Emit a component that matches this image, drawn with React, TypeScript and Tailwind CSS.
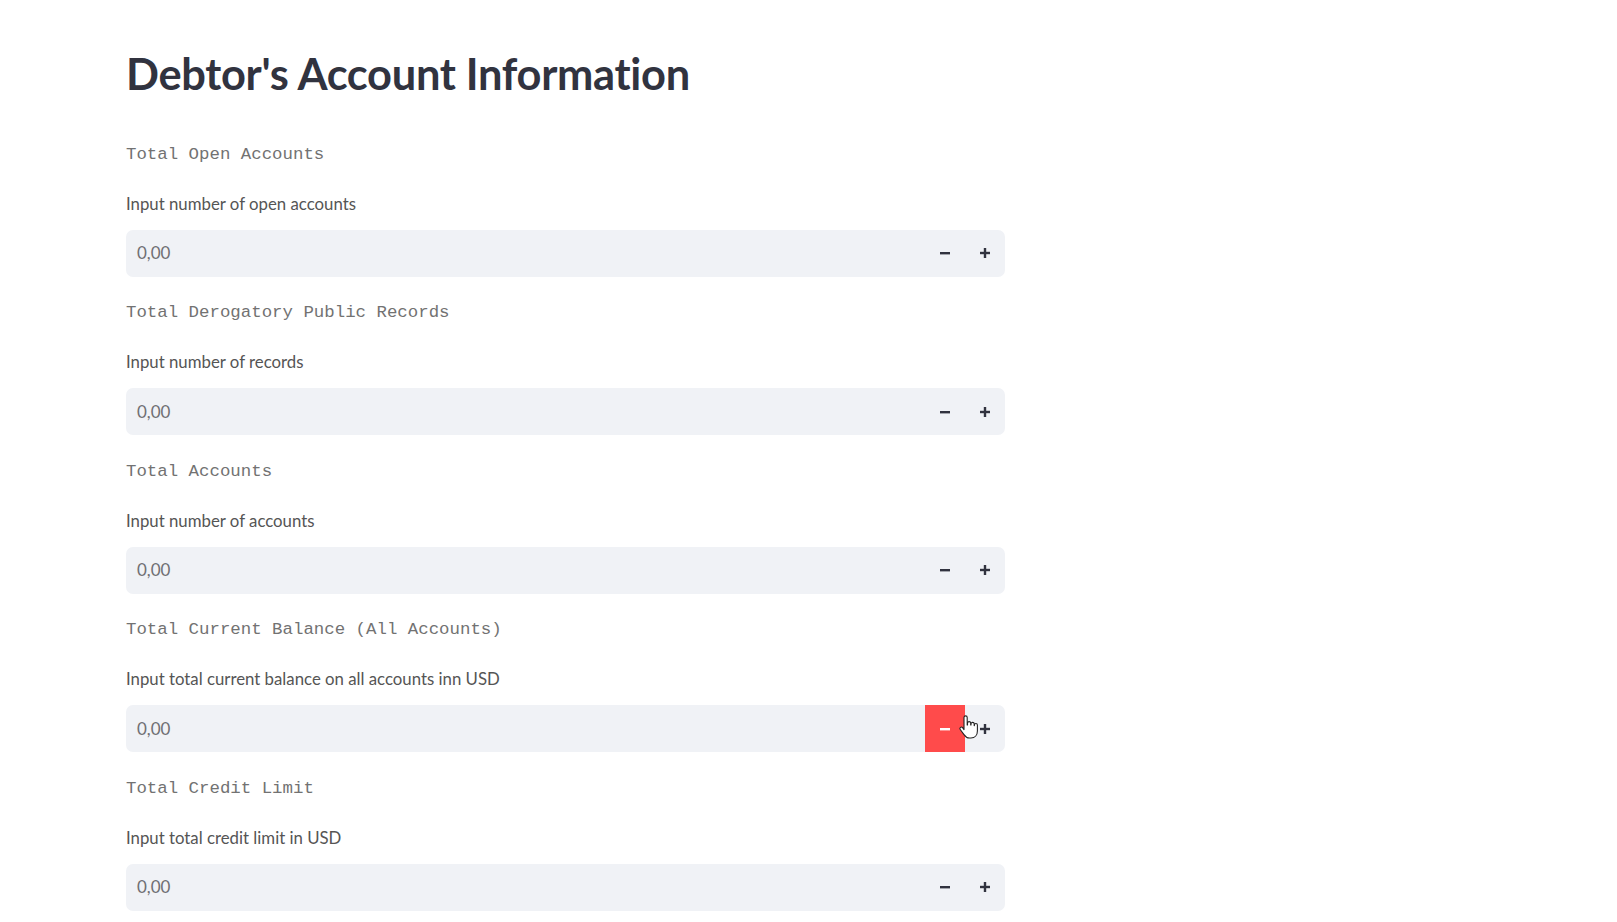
import React from 'react';

const fields = [
  { label: 'Total Open Accounts', help: 'Input number of open accounts' },
  { label: 'Total Derogatory Public Records', help: 'Input number of records' },
  { label: 'Total Accounts', help: 'Input number of accounts' },
  { label: 'Total Current Balance (All Accounts)', help: 'Input total current balance on all accounts inn USD', hover: true },
  { label: 'Total Credit Limit', help: 'Input total credit limit in USD' },
];

const Minus = () => (
  <svg width="12" height="12" viewBox="0 0 12 12">
    <rect x="1" y="5" width="10" height="2.4" fill="currentColor" />
  </svg>
);

const Plus = () => (
  <svg width="12" height="12" viewBox="0 0 12 12">
    <rect x="1" y="4.8" width="10" height="2.4" fill="currentColor" />
    <rect x="4.8" y="1" width="2.4" height="10" fill="currentColor" />
  </svg>
);

const HandCursor = () => (
  <svg width="22" height="26" viewBox="0 0 22 26">
    <path
      d="M6 13V3.5a1.6 1.6 0 0 1 3.2 0V11h.3V9.2a1.6 1.6 0 0 1 3.2 0V11h.3V10a1.6 1.6 0 0 1 3.2 0v1.6h.2v-.6a1.5 1.5 0 0 1 3 0v6c0 4-2.4 7-6.5 7h-1.5c-2.6 0-4-1.3-5.4-3.4L2.2 15.5a1.5 1.5 0 0 1 2.4-1.8L6 15.6z"
      fill="#fff"
      stroke="#222"
      strokeWidth="1.1"
      strokeLinejoin="round"
    />
  </svg>
);

const NumberInput = ({ hover }: { hover?: boolean }) => (
  <div className="relative flex h-[47px] w-full items-center rounded-[7px] bg-[#f0f2f6]">
    <span className="flex-1 pl-[11px] text-[17px] text-[#6f6f73] font-['Lato',sans-serif]">0,00</span>
    <button className={`flex h-full w-[40px] items-center justify-center ${hover ? 'bg-[#ff4b4b] text-white' : 'text-[#31333f]'}`}>
      <Minus />
    </button>
    <button className="flex h-full w-[40px] items-center justify-center text-[#31333f]">
      <Plus />
    </button>
    {hover && (
      <div className="absolute left-[832px] top-[9px]">
        <HandCursor />
      </div>
    )}
  </div>
);

export default function App() {
  return (
    <div className="min-h-[922px] bg-white pl-[126px] pt-[51px]">
      <div className="w-[879px]">
        <h1 className="flex h-[46px] items-center text-[43.4px] font-bold leading-none tracking-[-0.3px] text-[#31333f] font-['Lato',sans-serif]">
          Debtor's Account Information
        </h1>
        <div className="mt-[44px]">
          {fields.map((f, i) => (
            <section key={i} className="mb-[23px] flex flex-col">
              <div className="flex h-[28px] items-center text-[17.4px] text-[#727272] font-['Liberation_Mono',monospace]">
                {f.label}
              </div>
              <div className="mt-[21.5px] flex h-[26px] items-center text-[16.8px] text-[#555555] font-['Lato',sans-serif]">
                {f.help}
              </div>
              <div className="mt-[13px]">
                <NumberInput hover={f.hover} />
              </div>
            </section>
          ))}
        </div>
      </div>
    </div>
  );
}
